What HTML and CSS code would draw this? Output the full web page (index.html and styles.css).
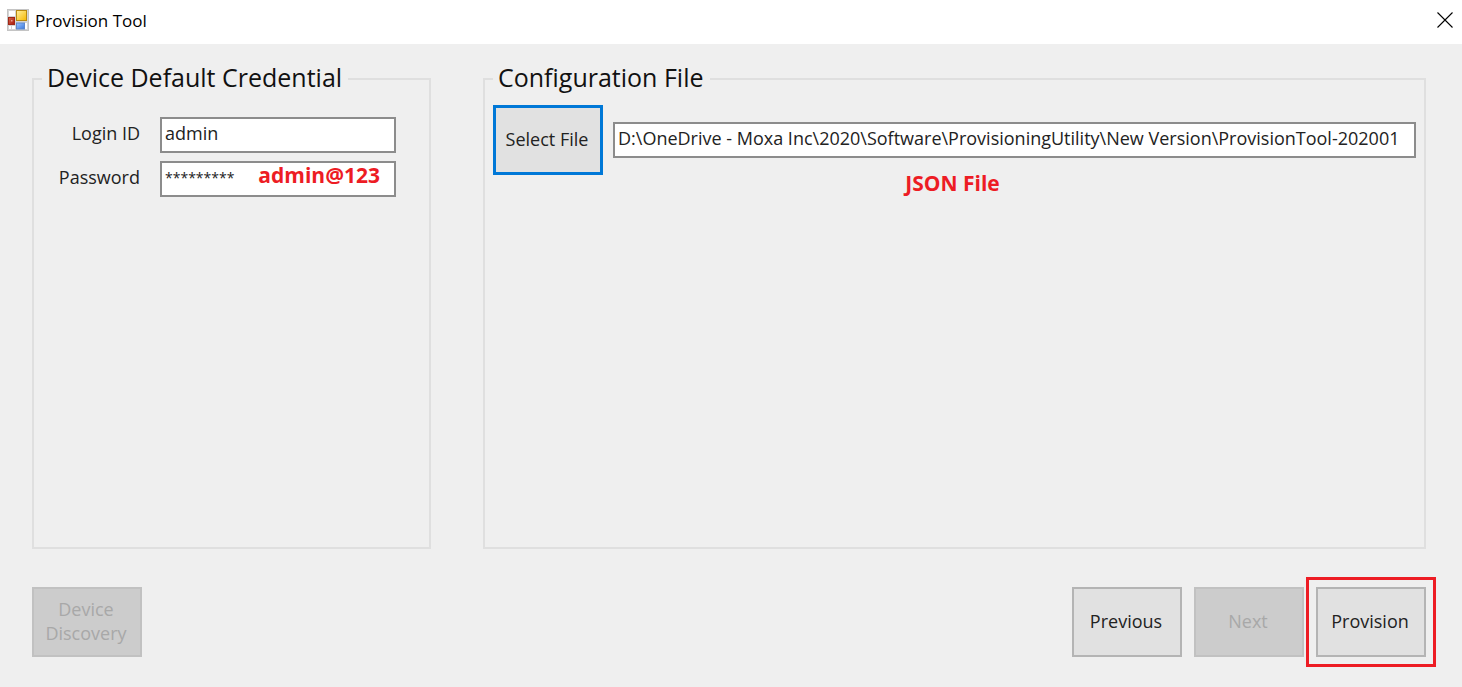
FILE: index.html
```html
<!DOCTYPE html>
<html lang="en">
<head>
<meta charset="utf-8">
<meta name="viewport" content="width=device-width, initial-scale=1">
<title>Provision Tool</title>
<link rel="stylesheet" href="styles.css">
</head>
<body>
<header class="titlebar">
  <svg class="app-icon" viewBox="0 0 22 22" aria-hidden="true">
    <defs>
      <linearGradient id="gold" x1="0" y1="0" x2="1" y2="1"><stop offset="0" stop-color="#fff0a0"/><stop offset="1" stop-color="#f5b800"/></linearGradient>
      <linearGradient id="blue" x1="0" y1="0" x2="1" y2="1"><stop offset="0" stop-color="#9cc4ff"/><stop offset="1" stop-color="#3a78dc"/></linearGradient>
      <linearGradient id="red" x1="0" y1="0" x2="1" y2="1"><stop offset="0" stop-color="#d86850"/><stop offset="1" stop-color="#a81808"/></linearGradient>
    </defs>
    <rect x="0.5" y="0.5" width="21" height="21" fill="#d4d4d4" stroke="#c4c4c4"/>
    <path fill="#fff" d="M2 2h6v5H2zM2 17h2v3H2zM5 17h3v3H5zM18 14h2v6h-2z"/>
    <rect x="9.5" y="1.5" width="10" height="10" fill="url(#gold)" stroke="#b88a10"/>
    <rect x="1.5" y="8.5" width="6" height="7" fill="url(#red)" stroke="#a02818"/>
    <rect x="4" y="11" width="1.5" height="1.5" fill="#e8a090"/>
    <rect x="9.5" y="14" width="8" height="6" fill="url(#blue)" stroke="#5c88cc"/>
  </svg>
  <h1 class="title">Provision Tool</h1>
  <button class="close" type="button" aria-label="Close">
    <svg class="close-icon" viewBox="0 0 16 16" aria-hidden="true"><path d="M.5.5l15 15M15.5.5l-15 15" fill="none" stroke="#000" stroke-width="1.1"/></svg>
  </button>
</header>
<form class="content">
  <div class="groups">
    <fieldset class="group">
      <legend class="legend">Device Default Credential</legend>
      <div class="credentials">
        <label class="label" for="login">Login ID</label>
        <input class="field" id="login" type="text" value="admin">
        <label class="label" for="password">Password</label>
        <div class="password">
          <input class="field field-masked" id="password" type="text" value="*********">
          <span class="note note-password">admin@123</span>
        </div>
      </div>
    </fieldset>
    <fieldset class="group">
      <legend class="legend">Configuration File</legend>
      <div class="file">
        <button class="button button-focus" type="button">Select File</button>
        <input class="field" type="text" aria-label="Configuration file path" value="D:\OneDrive - Moxa Inc\2020\Software\ProvisioningUtility\New Version\ProvisionTool-202001">
      </div>
      <p class="note note-file">JSON File</p>
    </fieldset>
  </div>
  <footer class="actions">
    <button class="button button-first" type="button" disabled>Device Discovery</button>
    <button class="button" type="button">Previous</button>
    <button class="button" type="button" disabled>Next</button>
    <button class="button button-marked" type="button">Provision</button>
  </footer>
</form>
</body>
</html>
```
FILE: styles.css
```css
* { box-sizing: border-box; }

body {
  display: flex;
  flex-direction: column;
  min-height: 100vh;
  margin: 0;
  background: #efefef;
  color: #222;
  font: 18px/24px "Open Sans", "Noto Sans", sans-serif;
}

.titlebar {
  display: flex;
  align-items: center;
  height: 44px;
  padding: 0 9px 4px 7px;
  background: #fff;
}

.app-icon { width: 22px; height: 22px; }

.title {
  margin: 0 auto 0 6px;
  padding-top: 2px;
  color: #000;
  font-size: 17px;
  font-weight: 400;
}

.close {
  display: flex;
  padding: 0;
  border: 0;
  background: none;
}

.close-icon { width: 16px; height: 16px; }

.content {
  display: flex;
  flex: 1;
  flex-direction: column;
  padding: 16px 36px 30px 32px;
}

.groups {
  display: grid;
  flex: 1;
  grid-template-columns: 399px 1fr;
  gap: 52px;
}

.group {
  min-width: 0;
  margin: 0;
  padding: 0 8px;
  border: 2px solid #dfdfdf;
}

.legend {
  padding: 0 6px 4px 5px;
  color: #111;
  font-size: 25px;
  line-height: 34px;
}

.credentials {
  display: grid;
  grid-template-columns: 98px 1fr;
  gap: 8px 20px;
  padding: 19px 25px 0 0;
}

.label {
  padding: 4px 0;
  text-align: right;
}

.field {
  width: 100%;
  min-width: 0;
  height: 36px;
  padding: 0 3px 4px;
  border: 2px solid #8c8c8c;
  border-radius: 0;
  background: #fff;
  color: #222;
  font: inherit;
}

.field-masked { font-size: 14px; }

.password { position: relative; }

.note {
  color: #ed1c24;
  font-size: 21px;
  font-weight: 700;
}

.note-password {
  position: absolute;
  top: 2px;
  right: 16px;
}

.note-file {
  margin: 0 4px 0 0;
  line-height: 16px;
  text-align: center;
}

.file {
  display: flex;
  align-items: center;
  gap: 10px;
  padding-top: 7px;
}

.button {
  flex: none;
  width: 110px;
  height: 70px;
  padding: 0 2px 2px 0;
  border: 2px solid #b4b4b4;
  background: #e1e1e1;
  color: #222;
  font: inherit;
}

.button:disabled {
  border-color: #c1c1c1;
  background: #ccc;
  color: #a8a8a8;
}

.button-focus {
  border: 3px solid #0078d7;
}

.actions {
  display: flex;
  gap: 12px;
  padding-top: 38px;
}

.button-first { margin-right: auto; }

.button-marked { position: relative; }

.button-marked::after {
  position: absolute;
  inset: -12px;
  border: 3px solid #ed1c24;
  content: "";
}
```
